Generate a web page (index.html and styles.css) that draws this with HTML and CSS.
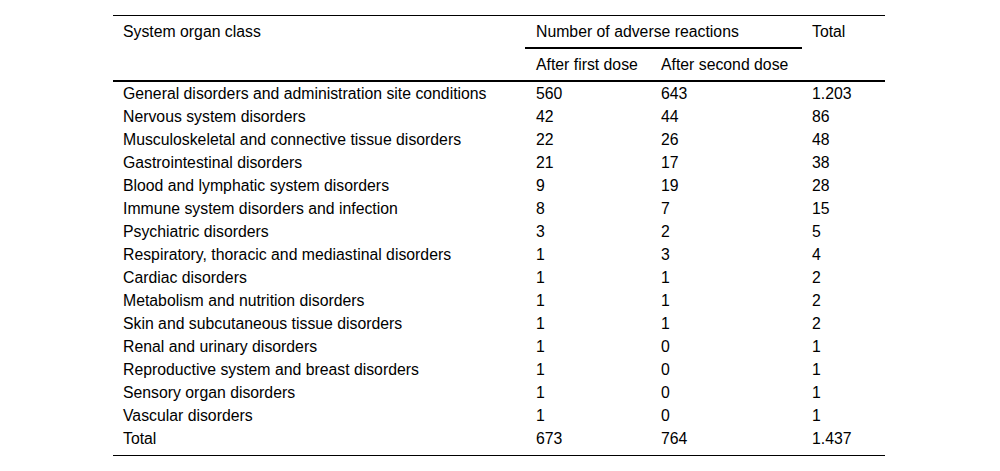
FILE: index.html
```html
<!DOCTYPE html>
<html lang="en">
<head>
<meta charset="utf-8">
<title>Adverse reactions</title>
<link rel="stylesheet" href="styles.css">
</head>
<body>
<table class="ae-table">
  <colgroup>
    <col class="c1"><col class="c2"><col class="c3"><col class="c4">
  </colgroup>
  <thead>
    <tr class="h1">
      <th rowspan="2" class="rs">System organ class</th>
      <th colspan="2" class="span">Number of adverse reactions</th>
      <th rowspan="2" class="rs">Total</th>
    </tr>
    <tr class="h2">
      <th>After first dose</th>
      <th>After second dose</th>
    </tr>
  </thead>
  <tbody>
    <tr><td>General disorders and administration site conditions</td><td>560</td><td>643</td><td>1.203</td></tr>
    <tr><td>Nervous system disorders</td><td>42</td><td>44</td><td>86</td></tr>
    <tr><td>Musculoskeletal and connective tissue disorders</td><td>22</td><td>26</td><td>48</td></tr>
    <tr><td>Gastrointestinal disorders</td><td>21</td><td>17</td><td>38</td></tr>
    <tr><td>Blood and lymphatic system disorders</td><td>9</td><td>19</td><td>28</td></tr>
    <tr><td>Immune system disorders and infection</td><td>8</td><td>7</td><td>15</td></tr>
    <tr><td>Psychiatric disorders</td><td>3</td><td>2</td><td>5</td></tr>
    <tr><td>Respiratory, thoracic and mediastinal disorders</td><td>1</td><td>3</td><td>4</td></tr>
    <tr><td>Cardiac disorders</td><td>1</td><td>1</td><td>2</td></tr>
    <tr><td>Metabolism and nutrition disorders</td><td>1</td><td>1</td><td>2</td></tr>
    <tr><td>Skin and subcutaneous tissue disorders</td><td>1</td><td>1</td><td>2</td></tr>
    <tr><td>Renal and urinary disorders</td><td>1</td><td>0</td><td>1</td></tr>
    <tr><td>Reproductive system and breast disorders</td><td>1</td><td>0</td><td>1</td></tr>
    <tr><td>Sensory organ disorders</td><td>1</td><td>0</td><td>1</td></tr>
    <tr><td>Vascular disorders</td><td>1</td><td>0</td><td>1</td></tr>
    <tr class="total"><td>Total</td><td>673</td><td>764</td><td>1.437</td></tr>
  </tbody>
</table>
</body>
</html>
```

FILE: styles.css
```css
html, body {
  margin: 0;
  padding: 0;
  background: #fff;
}

body {
  padding: 15px 0 0 113px;
  font-family: "Liberation Sans", Arial, sans-serif;
  font-size: 15.8px;
  color: #000;
}

.ae-table {
  border-collapse: separate;
  border-spacing: 0;
  table-layout: fixed;
  width: 772px;
  border-top: 1px solid #000;
  border-bottom: 1px solid #000;
}

.c1 { width: 412px; }
.c2 { width: 126px; }
.c3 { width: 151px; }
.c4 { width: 83px; }

.ae-table th {
  font-weight: normal;
  text-align: left;
  line-height: 17px;
  padding: 7px 10px 7px 10px;
  vertical-align: top;
  white-space: nowrap;
}

.h1 .span {
  border-bottom: 2px solid #000;
  padding-left: 11px;
}

.h1 .rs {
  border-bottom: 2px solid #000;
}

.h2 th {
  border-bottom: 2px solid #000;
}

.h2 th:first-child {
  padding-left: 11px;
}

.ae-table td {
  height: 23px;
  line-height: 23px;
  padding: 0 10px;
  white-space: nowrap;
  vertical-align: top;
}

.ae-table td:nth-child(2) {
  padding-left: 11px;
}

.total td {
  padding-bottom: 5px;
}
```
